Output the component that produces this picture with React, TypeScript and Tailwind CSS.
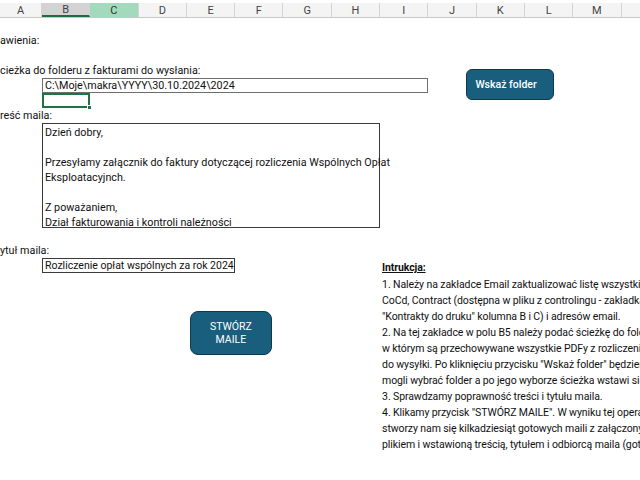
const cols = ['A', 'B', 'C', 'D', 'E', 'F', 'G', 'H', 'I', 'J', 'K', 'L', 'M', 'N'];

const instr = [
  '1. Należy na zakładce Email zaktualizować listę wszystkich CoCd',
  'CoCd, Contract (dostępna w pliku z controlingu - zakładka',
  '"Kontrakty do druku" kolumna B i C) i adresów email.',
  '2. Na tej zakładce w polu B5 należy podać ścieżkę do folderu,',
  'w którym są przechowywane wszystkie PDFy z rozliczeniami',
  'do wysyłki. Po kliknięciu przycisku "Wskaż folder" będziemy',
  'mogli wybrać folder a po jego wyborze ścieżka wstawi się',
  '3. Sprawdzamy poprawność treści i tytułu maila.',
  '4. Klikamy przycisk "STWÓRZ MAILE". W wyniku tej operacji',
  'stworzy nam się kilkadziesiąt gotowych maili z załączonym',
  'plikiem i wstawioną treścią, tytułem i odbiorcą maila (gotowe',
];

const ColumnHeader = () => (
  <div className="grid h-[18px] grid-cols-[42px_repeat(13,48.3px)] border-b border-[#c8c8c8] bg-white pt-[3px]">
    {cols.map((c) => (
      <div
        key={c}
        className={
          'flex items-center justify-center border-r border-[#d4d4d4] pt-[1px] text-[11px] leading-none ' +
          (c === 'B'
            ? 'border-b-2 border-b-[#1e6b41] bg-[#d3d3d3] text-[#444]'
            : c === 'C'
              ? 'bg-[#a3d9bc] text-[#1f3d2c]'
              : 'bg-[#f4f4f4] text-[#444]')
        }
      >
        {c}
      </div>
    ))}
  </div>
);

const App = () => {
  return (
    <div
      className="h-[480px] w-[640px] overflow-hidden bg-white text-[10.75px] text-[#111]"
      style={{ fontFamily: '"Roboto", "Liberation Sans", sans-serif' }}
    >
      <ColumnHeader />
      <div className="grid grid-cols-[42px_repeat(13,48.3px)] grid-rows-[repeat(31,15px)]">
        <div className="col-[1/6] row-start-2 flex items-center pt-[2px] whitespace-nowrap">awienia:</div>
        <div className="col-[1/10] row-start-4 flex items-center pt-[2px] whitespace-nowrap">cieżka do folderu z fakturami do wysłania:</div>
        <div className="col-[2/10] row-start-5 flex items-center border border-[#6e6e6e] px-[2px] pt-[1px] whitespace-nowrap">
          C:\Moje\makra\YYYY\30.10.2024\2024
        </div>
        <div className="relative col-start-2 row-start-6 border-2 border-[#217346]">
          <div className="absolute -right-[4px] -bottom-[4px] h-[5px] w-[5px] border border-white bg-[#217346]" />
        </div>
        <div className="col-[1/6] row-start-7 flex items-center pt-[2px] whitespace-nowrap">reść maila:</div>
        <div className="col-[2/9] row-[8/15] flex flex-col border border-[#3a3a3a] px-[2px] pt-[1px] leading-[15px]">
          <div>Dzień dobry,</div>
          <div>&nbsp;</div>
          <div className="whitespace-nowrap">Przesyłamy załącznik do faktury dotyczącej rozliczenia Wspólnych Opłat</div>
          <div>Eksploatacyjnch.</div>
          <div>&nbsp;</div>
          <div>Z poważaniem,</div>
          <div>Dział fakturowania i kontroli należności</div>
        </div>
        <div className="col-[1/6] row-start-16 flex items-center pt-[2px] whitespace-nowrap">ytuł maila:</div>
        <div className="col-[2/6] row-start-17 flex items-center border border-[#3a3a3a] px-[2px] pt-[1px] text-[10.5px] whitespace-nowrap">
          Rozliczenie opłat wspólnych za rok 2024
        </div>

        <div className="col-[10/13] row-[4/7] self-start">
          <button className="mt-[6px] ml-[38px] flex h-[31px] w-[88px] items-start rounded-[6px] border border-[#0e384c] bg-[#1a5e7e] px-[8px] pt-[7px] text-[10.5px] font-medium text-white">
            Wskaż folder
          </button>
        </div>

        <div className="col-[5/8] row-[20/24] self-start">
          <button className="mt-[8px] ml-[3px] flex h-[44px] w-[82px] flex-col items-center justify-center rounded-[8px] border border-[#0e384c] bg-[#1a5e7e] text-[10.5px] leading-[13px] text-white">
            <span>STWÓRZ</span>
            <span>MAILE</span>
          </button>
        </div>

        <div className="col-[9/15] row-[17/31] pt-[2px] pl-[2px] text-[10.5px] leading-[16px] tracking-[-0.1px] whitespace-nowrap">
          <div className="mb-[1px] font-bold underline">Intrukcja:</div>
          {instr.map((l) => (
            <div key={l}>{l}</div>
          ))}
        </div>
      </div>
    </div>
  );
};

export default App;
